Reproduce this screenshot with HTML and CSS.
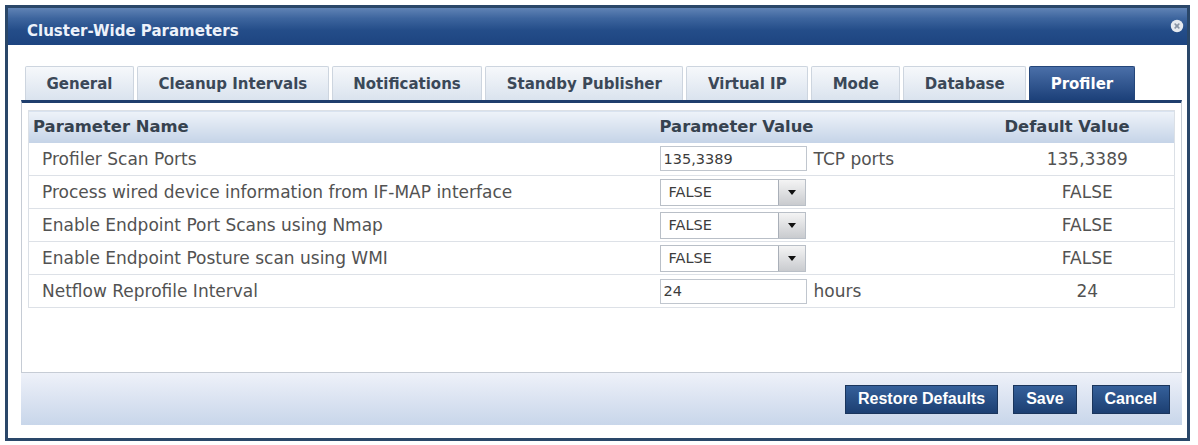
FILE: index.html
```html
<!DOCTYPE html>
<html lang="en">
<head>
    <meta charset="UTF-8">
    <meta name="viewport" content="width=device-width, initial-scale=1.0">
    <title>Cluster-Wide Parameters</title>
    <link rel="stylesheet" href="styles.css">
</head>
<body>
    <div class="dialog">
        <div class="dialog-title">
            <span>Cluster-Wide Parameters</span>
            <button class="close" title="Close">
                <svg width="14" height="14" viewBox="0 0 14 14">
                    <circle cx="7" cy="7" r="6.2" fill="#e6eaf0"/>
                    <path d="M5.2 5.2 L8.8 8.8 M8.8 5.2 L5.2 8.8" stroke="#8793a5" stroke-width="1.7" stroke-linecap="round"/>
                </svg>
            </button>
        </div>

        <div class="dialog-body">
            <ul class="tabs">
                <li>General</li>
                <li>Cleanup Intervals</li>
                <li>Notifications</li>
                <li>Standby Publisher</li>
                <li>Virtual IP</li>
                <li>Mode</li>
                <li>Database</li>
                <li class="active">Profiler</li>
            </ul>

            <div class="tab-panel">
                <table class="params">
                    <thead>
                        <tr>
                            <th class="col-name">Parameter Name</th>
                            <th class="col-value">Parameter Value</th>
                            <th class="col-default">Default Value</th>
                        </tr>
                    </thead>
                    <tbody>
                        <tr>
                            <td>Profiler Scan Ports</td>
                            <td><input type="text" class="field" value="135,3389"><span class="unit">TCP ports</span></td>
                            <td class="default">135,3389</td>
                        </tr>
                        <tr>
                            <td>Process wired device information from IF-MAP interface</td>
                            <td>
                                <div class="select"><span>FALSE</span><i class="select-btn"></i></div>
                            </td>
                            <td class="default">FALSE</td>
                        </tr>
                        <tr>
                            <td>Enable Endpoint Port Scans using Nmap</td>
                            <td>
                                <div class="select"><span>FALSE</span><i class="select-btn"></i></div>
                            </td>
                            <td class="default">FALSE</td>
                        </tr>
                        <tr>
                            <td>Enable Endpoint Posture scan using WMI</td>
                            <td>
                                <div class="select"><span>FALSE</span><i class="select-btn"></i></div>
                            </td>
                            <td class="default">FALSE</td>
                        </tr>
                        <tr>
                            <td>Netflow Reprofile Interval</td>
                            <td><input type="text" class="field" value="24"><span class="unit">hours</span></td>
                            <td class="default">24</td>
                        </tr>
                    </tbody>
                </table>
            </div>

            <div class="dialog-footer">
                <button class="btn">Restore Defaults</button>
                <button class="btn">Save</button>
                <button class="btn">Cancel</button>
            </div>
        </div>
    </div>
</body>
</html>
```

FILE: styles.css
```css
* {
    box-sizing: border-box;
}

body {
    margin: 0;
    background: #fff;
    font-family: 'DejaVu Sans', Verdana, sans-serif;
    color: #525252;
}

.dialog {
    margin: 5px;
    width: 1185px;
    height: 436px;
    border: 3px solid #2a4769;
    background: #fff;
}

/* title bar */
.dialog-title {
    height: 37px;
    padding: 9px 3px 0 19px;
    display: flex;
    align-items: center;
    background: linear-gradient(#6083b5 0%, #3d659e 28%, #244d89 60%, #1d4480 100%);
    color: #edf2fa;
    font-weight: bold;
    font-size: 15px;
}

.close {
    margin-left: auto;
    margin-top: -10px;
    padding: 0;
    border: none;
    background: none;
    width: 14px;
    height: 14px;
    cursor: pointer;
}

.close svg {
    display: block;
}

.dialog-body {
    padding: 21px 5px 0 13px;
}

/* tabs */
.tabs {
    list-style: none;
    margin: 0;
    padding: 0 0 0 4px;
    display: flex;
    gap: 3px;
}

.tabs li {
    min-width: 89px;
    height: 34px;
    padding: 0 20.5px;
    display: flex;
    align-items: center;
    justify-content: center;
    border: 1px solid #cdd5df;
    border-bottom: none;
    border-radius: 2px 2px 0 0;
    background: linear-gradient(#f6f8fb, #dae3ee);
    color: #3b4858;
    font-weight: bold;
    font-size: 15px;
    cursor: pointer;
}

.tabs li.active {
    border-color: #24467a;
    background: linear-gradient(#4a6fa8, #1c4079);
    color: #fff;
}

.tab-panel {
    height: 273px;
    padding: 7px 6px;
    border: 1px solid #c6ccd5;
    border-top: 3px solid #1f3e6d;
}

/* parameter table */
.params {
    width: 100%;
    border-collapse: collapse;
    border: 1px solid #dbe0e6;
}

.params th {
    height: 32px;
    padding: 0 4px;
    text-align: left;
    font-size: 16.4px;
    color: #36424f;
    background: linear-gradient(#eef3f9, #c4d3e7);
}

.col-name {
    width: 627px;
}

.col-value {
    width: 345px;
}

.params td {
    height: 33px;
    padding: 0 0 0 13px;
    border-bottom: 1px solid #dde1e7;
    font-size: 17px;
    white-space: nowrap;
}

.params td:nth-child(2) {
    padding-left: 4px;
}

.params td.default {
    padding: 0;
    text-align: center;
}

.field {
    width: 147px;
    height: 25px;
    padding: 0 3px;
    border: 1px solid #c0c6ce;
    font-family: 'DejaVu Sans', Verdana, sans-serif;
    font-size: 14.5px;
    color: #3c3c3c;
    vertical-align: middle;
}

.unit {
    margin-left: 7px;
    vertical-align: middle;
}

.select {
    width: 146px;
    height: 27px;
    display: flex;
    align-items: center;
    border: 1px solid #b9bfc7;
    background: #fff;
    font-size: 14.5px;
    color: #3c3c3c;
}

.select span {
    flex: 1;
    padding-left: 8px;
}

.select-btn {
    width: 27px;
    height: 25px;
    border-left: 1px solid #a9afb8;
    background: linear-gradient(#f4f4f4, #c9cbcf);
    display: flex;
    align-items: center;
    justify-content: center;
}

.select-btn::after {
    content: '';
    border-left: 4px solid transparent;
    border-right: 4px solid transparent;
    border-top: 5px solid #111;
}

/* footer buttons */
.dialog-footer {
    height: 52px;
    padding-right: 12px;
    display: flex;
    justify-content: flex-end;
    align-items: center;
    gap: 15px;
    background: linear-gradient(#eef1f9, #c8d6ea);
}

.btn {
    height: 29px;
    padding: 0 12px;
    border: 1px solid #1a355c;
    background: linear-gradient(#35609a, #1c3f72);
    color: #fff;
    font-family: 'Liberation Sans', Arial, sans-serif;
    font-weight: bold;
    font-size: 16px;
    cursor: pointer;
}

.btn:hover {
    background: linear-gradient(#4170ad, #23497f);
}
```
